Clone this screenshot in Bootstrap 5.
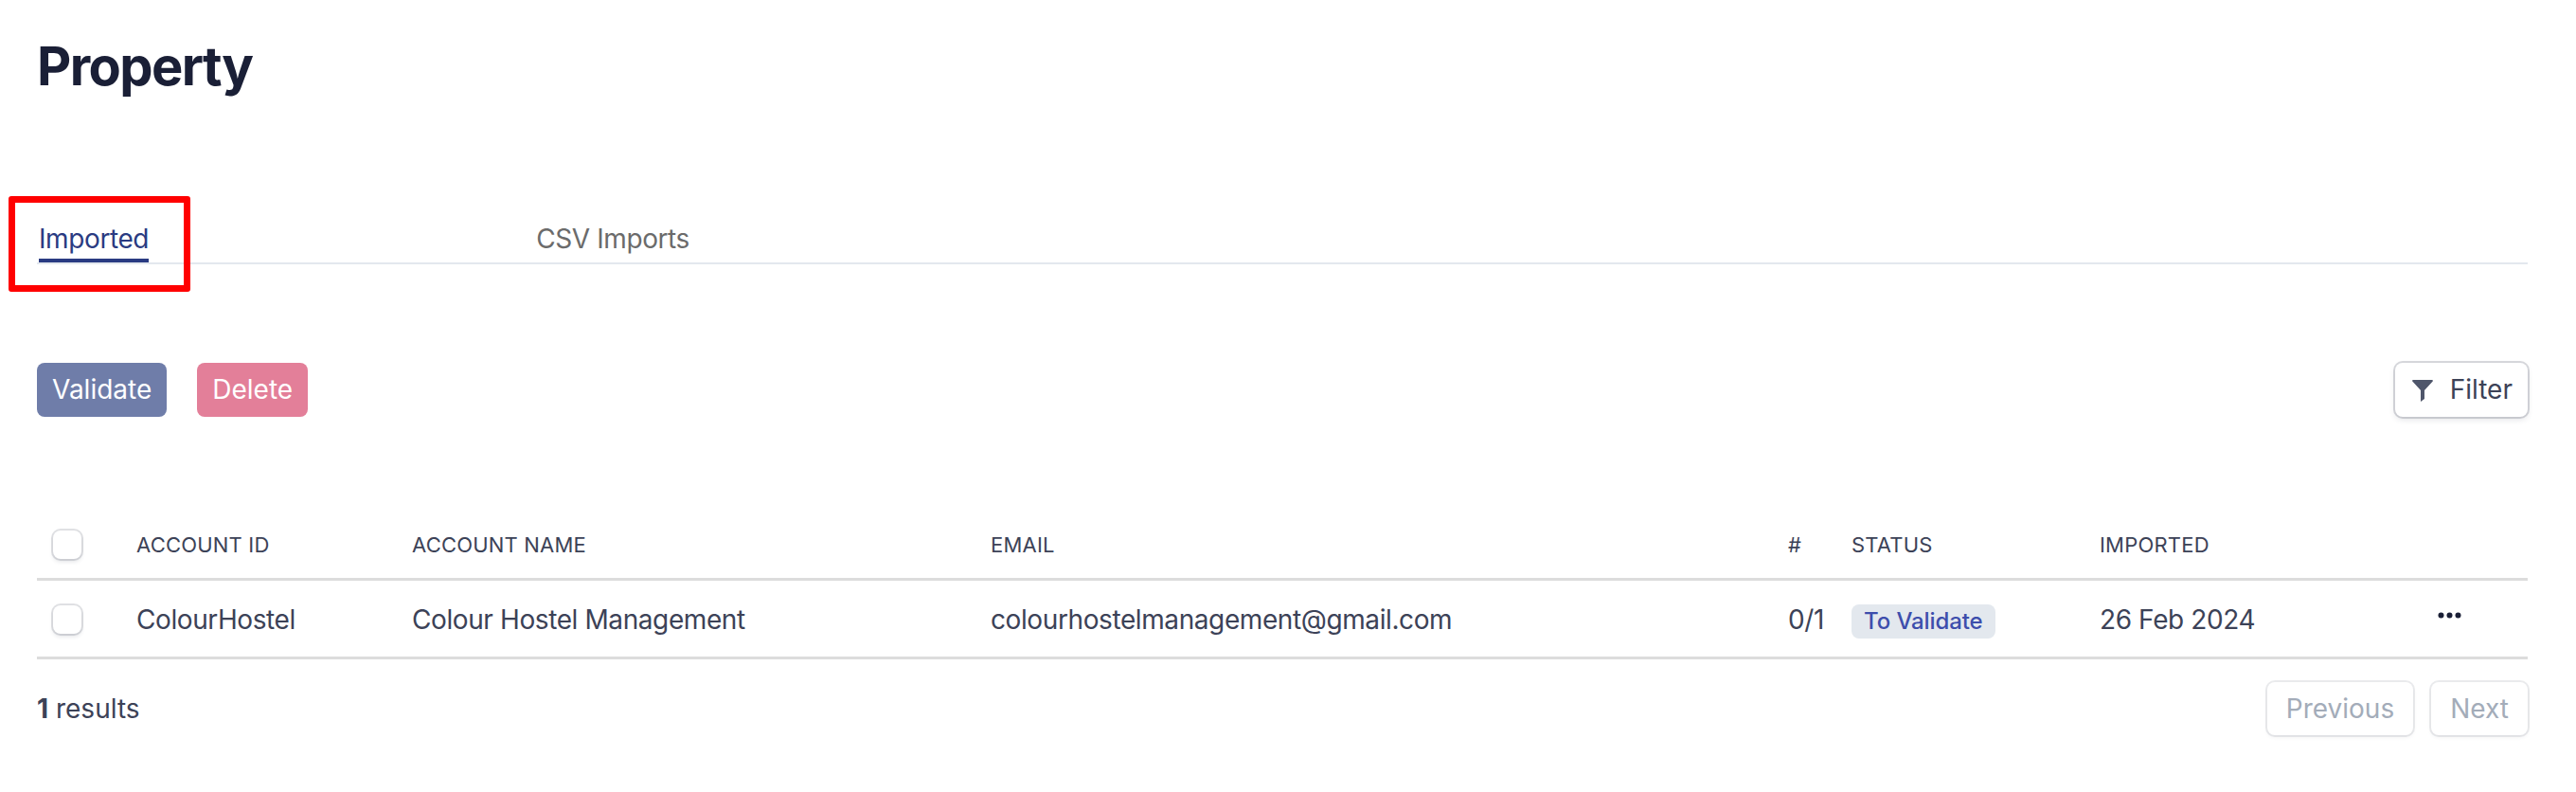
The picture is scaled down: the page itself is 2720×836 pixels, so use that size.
<!DOCTYPE html>
<html lang="en">

<head>
    <meta charset="UTF-8">
    <title>Property</title>
    <link href="https://cdn.jsdelivr.net/npm/bootstrap@5.3.0/dist/css/bootstrap.min.css" rel="stylesheet">
    <style>
        body {
            font-family: Inter, "Liberation Sans", sans-serif;
            background-color: #fff;
            color: #3c4257;
            font-size: 28px;
            letter-spacing: -.4px;
            overflow: hidden;
        }

        .page-wrap {
            position: relative;
            padding: 34px 51px 0 39px;
            height: 836px;
        }

        .page-title {
            font-size: 56px;
            font-weight: 700;
            letter-spacing: -1.6px;
            color: #1a1f36;
            line-height: 72px;
            margin: 0 0 124px 0;
        }

        .tab-row {
            border-bottom: 2px solid #e3e8ee;
            height: 49px;
            gap: 409px;
            padding-left: 2px;
        }

        .tab-link {
            display: block;
            font-size: 28px;
            line-height: 34px;
            padding-top: 5px;
            color: #6b6b6b;
            text-decoration: none;
            height: 47px;
        }

        .tab-link.is-current {
            color: #2a3b82;
            border-bottom: 4px solid #2a3b82;
        }

        .red-box {
            position: absolute;
            left: 9px;
            top: 207px;
            width: 192px;
            height: 101px;
            border: 7px solid #ff0000;
            border-radius: 3px;
        }

        .action-row {
            margin-top: 104px;
        }

        .act-btn {
            font-size: 28px;
            line-height: 35px;
            padding: 11px 16px;
            border: 0;
            border-radius: 8px;
            color: #fff;
            letter-spacing: 0;
        }

        .act-validate {
            background-color: #6f7da9;
        }

        .act-delete {
            background-color: #e37f99;
        }

        .plain-btn {
            font-size: 28px;
            line-height: 35px;
            padding: 11px 16px 11px 18px;
            background: #fff;
            color: #3c4257;
            border: 0;
            border-radius: 8px;
            letter-spacing: 0;
            gap: 18px;
            box-shadow: 0 0 0 2px rgba(60, 66, 87, .2), 0 3px 6px rgba(60, 66, 87, .14);
        }

        .plain-btn.is-off {
            color: #a3acb9;
            line-height: 34px;
            padding: 11px 20px;
            box-shadow: 0 0 0 2px rgba(60, 66, 87, .1), 0 2px 4px rgba(60, 66, 87, .08);
        }

        .action-gap {
            gap: 32px;
        }

        .data-table {
            table-layout: fixed;
            width: 100%;
            margin: 99px 0 0 0;
            border-collapse: collapse;
        }

        .data-table th,
        .data-table td {
            padding: 2px 0 0 0;
            border: 0;
            vertical-align: middle;
            color: #3c4257;
            white-space: nowrap;
        }

        .data-table th {
            height: 72px;
            font-size: 22px;
            font-weight: 400;
            letter-spacing: .2px;
            text-transform: uppercase;
            border-bottom: 3px solid #dcdcdc;
        }

        .data-table td {
            height: 83px;
            font-size: 28px;
            border-bottom: 3px solid #dcdcdc;
        }

        .tick-box {
            display: block;
            width: 30px;
            height: 30px;
            margin: 0 0 0 17px;
            border-radius: 8px;
            background: #fff;
            box-shadow: 0 0 0 2px rgba(60, 66, 87, .16), 0 3px 4px rgba(60, 66, 87, .14);
        }

        .status-pill {
            display: inline-block;
            background: #e3e8ee;
            color: #3d4eac;
            font-size: 24px;
            font-weight: 500;
            line-height: 36px;
            padding: 0 13px;
            border-radius: 8px;
            letter-spacing: -.1px;
        }

        .dots-icon {
            margin: 0 70px 9px 0;
        }

        .foot-row {
            margin-top: 24px;
        }

        .foot-gap {
            gap: 19px;
        }

        .result-count {
            letter-spacing: 0;
        }

        .result-count strong {
            font-weight: 700;
        }
    </style>
</head>

<body>
    <div class="page-wrap">
        <h1 class="page-title">Property</h1>

        <div class="tab-row d-flex">
            <a class="tab-link is-current" href="#">Imported</a>
            <a class="tab-link" href="#">CSV Imports</a>
        </div>
        <div class="red-box"></div>

        <div class="action-row d-flex justify-content-between align-items-center">
            <div class="d-flex action-gap">
                <button class="btn act-btn act-validate" type="button">Validate</button>
                <button class="btn act-btn act-delete" type="button">Delete</button>
            </div>
            <button class="btn plain-btn d-flex align-items-center" type="button">
                <svg width="22" height="24" viewBox="0 0 22 24" fill="#4f566b">
                    <path d="M1 1h20a1 1 0 0 1 .7 1.6L13 12v9l-4 3V12L.3 2.6A1 1 0 0 1 1 1z" />
                </svg>
                Filter
            </button>
        </div>

        <table class="data-table">
            <colgroup>
                <col style="width:105px">
                <col style="width:291px">
                <col style="width:611px">
                <col style="width:842px">
                <col style="width:67px">
                <col style="width:262px">
                <col>
            </colgroup>
            <thead>
                <tr>
                    <th><span class="tick-box"></span></th>
                    <th>Account ID</th>
                    <th>Account Name</th>
                    <th>Email</th>
                    <th>#</th>
                    <th>Status</th>
                    <th>Imported</th>
                </tr>
            </thead>
            <tbody>
                <tr>
                    <td><span class="tick-box"></span></td>
                    <td>ColourHostel</td>
                    <td>Colour Hostel Management</td>
                    <td>colourhostelmanagement@gmail.com</td>
                    <td>0/1</td>
                    <td><span class="status-pill">To Validate</span></td>
                    <td>
                        <div class="d-flex justify-content-between align-items-center">
                            <span>26 Feb 2024</span>
                            <svg class="dots-icon" width="25" height="7" viewBox="0 0 25 7" fill="#1a1f36">
                                <circle cx="3.5" cy="3.5" r="3" />
                                <circle cx="12.5" cy="3.5" r="3" />
                                <circle cx="21.5" cy="3.5" r="3" />
                            </svg>
                        </div>
                    </td>
                </tr>
            </tbody>
        </table>

        <div class="foot-row d-flex justify-content-between align-items-center">
            <div class="result-count"><strong>1</strong> results</div>
            <div class="d-flex foot-gap">
                <button class="btn plain-btn is-off" type="button">Previous</button>
                <button class="btn plain-btn is-off" type="button">Next</button>
            </div>
        </div>
    </div>
    <script src="https://cdn.jsdelivr.net/npm/bootstrap@5.3.0/dist/js/bootstrap.bundle.min.js"></script>
</body>

</html>
